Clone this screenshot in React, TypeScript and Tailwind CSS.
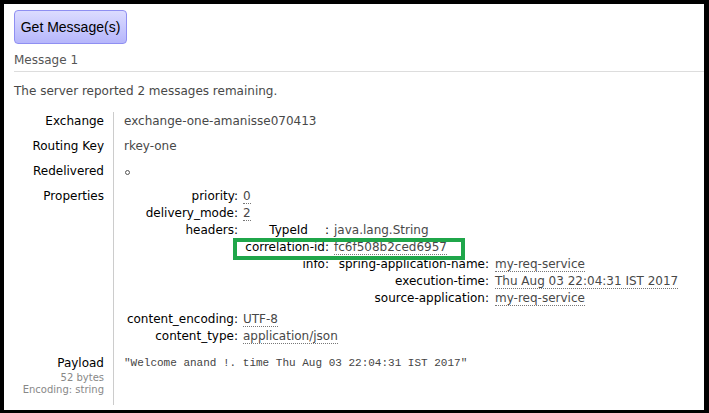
import React from "react";

const Abbr = ({ children }: { children: React.ReactNode }) => (
  <span className="border-b border-dotted border-[#777]">{children}</span>
);

function KeyRow({
  k,
  children,
  keyW,
  gap = "pl-[5px]",
}: {
  k: React.ReactNode;
  children: React.ReactNode;
  keyW: string;
  gap?: string;
}) {
  return (
    <div className="flex items-start">
      <div className={`${keyW} shrink-0 text-right text-black`}>{k}</div>
      <div className={`${gap} text-[#484848]`}>{children}</div>
    </div>
  );
}

export default function App() {
  return (
    <div className="w-[709px] h-[413px] overflow-hidden bg-white border-l-[4px] border-t-[4px] border-r-[5px] border-b-[3px] border-black font-['DejaVu_Sans',sans-serif] text-[12px] leading-[17px] text-[#484848]">
      {/* button */}
      <div className="pl-[10px] pt-[6px]">
        <button className="w-[113px] h-[34px] rounded-[4px] border border-[#8f8ff2] bg-gradient-to-b from-[#dcdcff] to-[#b6b6fb] font-['Liberation_Sans',sans-serif] text-[14px] text-black">
          Get Message(s)
        </button>
      </div>

      {/* heading */}
      <div className="ml-[10px] mt-[8px] pb-[3px] border-b border-[#dddddd] text-[12px] leading-[16px] text-[#555]">
        Message 1
      </div>

      <p className="ml-[10px] mt-[11px] text-[#484848]">
        The server reported 2 messages remaining.
      </p>

      {/* main table */}
      <div className="mt-[12px] ml-[10px] grid grid-cols-[99px_1fr]">
        <div className="pr-[9px] pt-[1px] text-right text-black">
          <div className="h-[25px]">Exchange</div>
          <div className="h-[25px]">Routing Key</div>
          <div className="h-[25px]">Redelivered</div>
          <div className="h-[167px]">Properties</div>
          <div>Payload</div>
          <div className="text-[10px] leading-[12px] text-[#888]">52 bytes</div>
          <div className="text-[10px] leading-[12px] text-[#888]">Encoding: string</div>
        </div>
        <div className="h-[293px] border-l border-[#cccccc] pl-[10px] pt-[1px]">
          <div className="h-[25px]">exchange-one-amanisse070413</div>
          <div className="h-[25px]">rkey-one</div>
          <div className="h-[25px] pl-[1px] pt-[7px]">
            <span className="block w-[5px] h-[5px] rounded-full border border-[#555]" />
          </div>

          {/* properties */}
          <div className="h-[167px] -ml-[1px]">
            <KeyRow k="priority:" keyW="w-[115px]">
              <Abbr>0</Abbr>
            </KeyRow>
            <KeyRow k="delivery_mode:" keyW="w-[115px]">
              <Abbr>2</Abbr>
            </KeyRow>
            <KeyRow k="headers:" keyW="w-[115px]" gap="pl-[3px]">
              <div className="pb-[4px]">
                <KeyRow
                  keyW="w-[88px]"
                  k={
                    <span>
                      TypeId<span className="inline-block w-[17px]" />:
                    </span>
                  }
                >
                  java.lang.String
                </KeyRow>
                <div className="relative">
                  <div className="absolute left-[-8px] top-[-1px] w-[232px] h-[22px] border-[4px] border-[#1fa64a]" />
                  <KeyRow k="correlation-id:" keyW="w-[88px]">
                    <Abbr>fc6f508b2ced6957</Abbr>
                  </KeyRow>
                </div>
                <KeyRow k="info:" keyW="w-[88px]" gap="pl-[8px]">
                  <div>
                    <KeyRow k="spring-application-name:" keyW="w-[152px]" gap="pl-[6px]">
                      <Abbr>my-req-service</Abbr>
                    </KeyRow>
                    <KeyRow k="execution-time:" keyW="w-[152px]" gap="pl-[6px]">
                      <Abbr>Thu Aug 03 22:04:31 IST 2017</Abbr>
                    </KeyRow>
                    <KeyRow k="source-application:" keyW="w-[152px]" gap="pl-[6px]">
                      <Abbr>my-req-service</Abbr>
                    </KeyRow>
                  </div>
                </KeyRow>
              </div>
            </KeyRow>
            <KeyRow k="content_encoding:" keyW="w-[115px]">
              <Abbr>UTF-8</Abbr>
            </KeyRow>
            <KeyRow k="content_type:" keyW="w-[115px]">
              <Abbr>application/json</Abbr>
            </KeyRow>
          </div>

          <div className="font-['Liberation_Mono',monospace] text-[11px] text-[#444]">
            "Welcome anand !. time Thu Aug 03 22:04:31 IST 2017"
          </div>
        </div>
      </div>
    </div>
  );
}
